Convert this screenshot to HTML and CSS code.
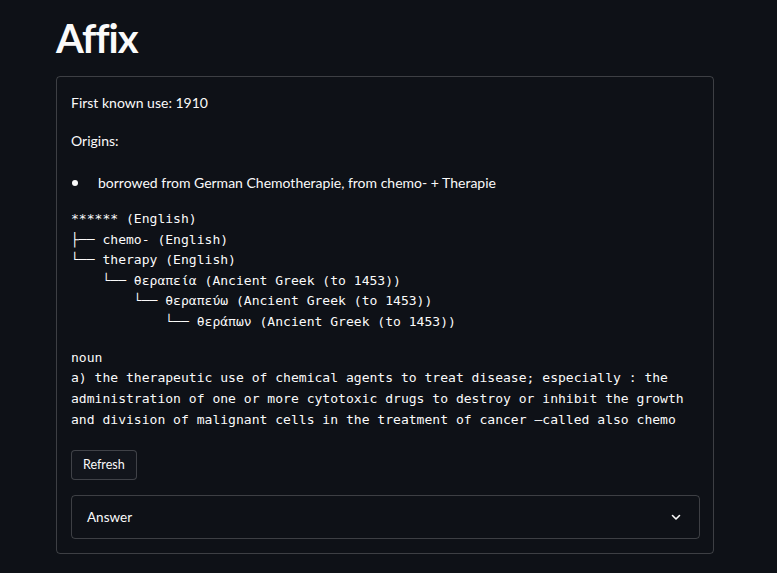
FILE: index.html
```html
<!DOCTYPE html>
<html>
<head>
<meta charset="utf-8">
<link rel="stylesheet" href="styles.css">
</head>
<body>
<main class="main">
  <h1 class="title">Affix</h1>
  <section class="card">
    <p class="line first">First known use: 1910</p>
    <p class="line origins">Origins:</p>
    <ul class="list">
      <li>borrowed from German Chemotherapie, from chemo- + Therapie</li>
    </ul>
    <pre class="code tree">****** (English)
├── chemo- (English)
└── therapy (English)
    └── θεραπεία (Ancient Greek (to 1453))
        └── θεραπεύω (Ancient Greek (to 1453))
            └── θεράπων (Ancient Greek (to 1453))</pre>
    <pre class="code def">noun
a) the therapeutic use of chemical agents to treat disease; especially : the
administration of one or more cytotoxic drugs to destroy or inhibit the growth
and division of malignant cells in the treatment of cancer —called also chemo</pre>
    <button class="btn">Refresh</button>
    <div class="expander">
      <span>Answer</span>
      <svg class="chev" width="12" height="12" viewBox="0 0 12 12"><path d="M2.5 4.5 L6 8 L9.5 4.5" fill="none" stroke="#fafafa" stroke-width="1.6" stroke-linecap="round" stroke-linejoin="round"/></svg>
    </div>
  </section>
</main>
</body>
</html>
```

FILE: styles.css
```css
html, body {
  margin: 0;
  padding: 0;
  background: #0e1117;
  color: #fafafa;
  font-family: "Lato", "Open Sans", sans-serif;
}
.main {
  width: 658px;
  padding-left: 56px;
  padding-top: 12px;
}
.title {
  margin: 0;
  font-size: 40px;
  line-height: 52px;
  font-weight: 700;
  letter-spacing: -1px;
  height: 64px;
}
.card {
  border: 1px solid rgba(250, 250, 250, 0.2);
  border-radius: 4px;
  padding: 15px 13px 14px 14px;
  display: flex;
  flex-direction: column;
  align-items: flex-start;
}
.line {
  margin: 0;
  font-size: 14px;
  line-height: 21px;
}
.origins {
  margin-top: 17px;
}
.list {
  margin: 21px 0 0 0;
  padding: 0 0 0 27px;
  list-style: none;
  font-size: 14px;
  line-height: 21px;
}
.list li {
  position: relative;
}
.list li::before {
  content: "";
  position: absolute;
  left: -26px;
  top: 8px;
  width: 6px;
  height: 6px;
  border-radius: 50%;
  background: #fafafa;
}
.code {
  margin: 0;
  font-family: "DejaVu Sans Mono", monospace;
  font-size: 13.05px;
  line-height: 20.6px;
  color: #fafafa;
}
.tree {
  margin-top: 16px;
}
.def {
  margin-top: 15px;
  line-height: 20.8px;
}
.btn {
  margin-top: 19px;
  height: 30px;
  padding: 0 11px;
  background: #12151c;
  color: #fafafa;
  border: 1px solid rgba(250, 250, 250, 0.2);
  border-radius: 4px;
  font-family: "Lato", "Open Sans", sans-serif;
  font-size: 12.5px;
}
.expander {
  margin-top: 15px;
  align-self: stretch;
  height: 44px;
  box-sizing: border-box;
  border: 1px solid rgba(250, 250, 250, 0.2);
  border-radius: 4px;
  display: flex;
  align-items: center;
  justify-content: space-between;
  padding: 0 17px 0 15px;
  font-size: 13.5px;
}
.chev {
  display: block;
}
```
